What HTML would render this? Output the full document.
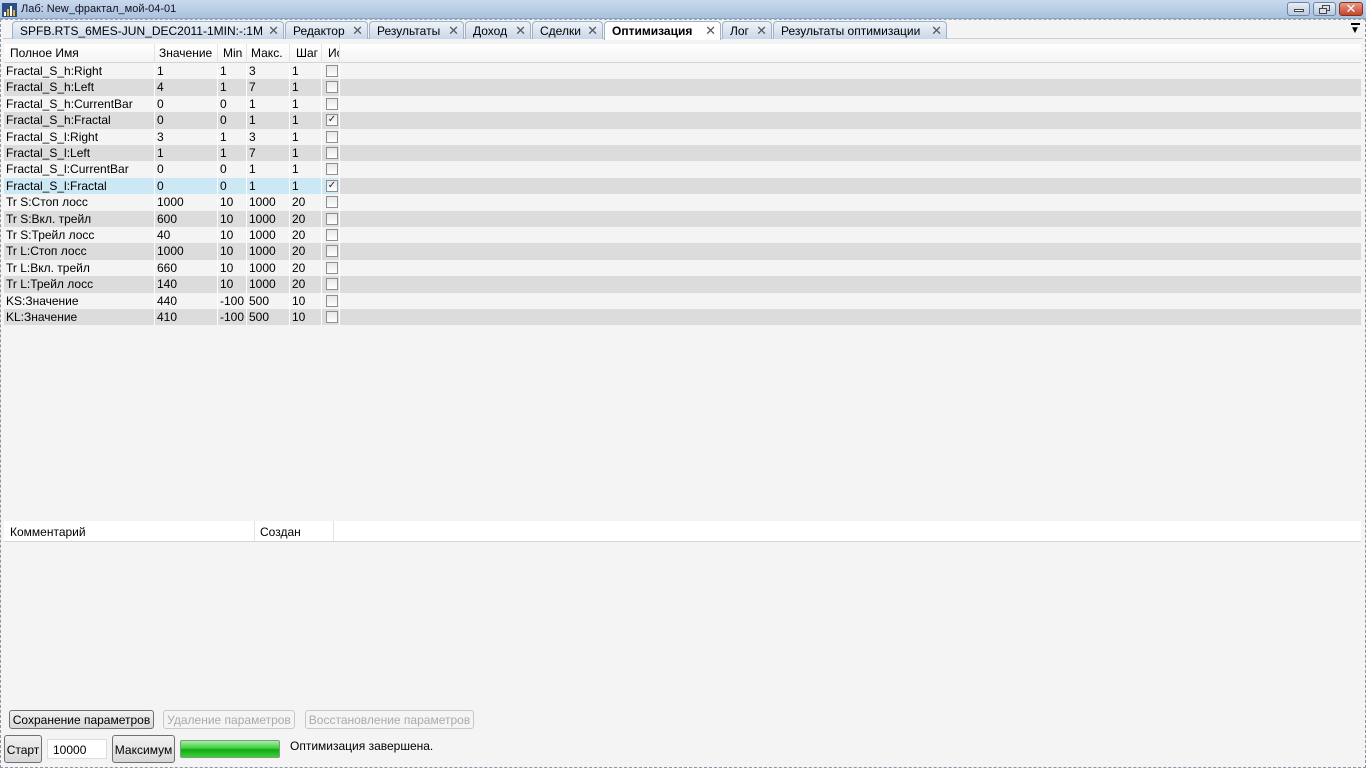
<!DOCTYPE html>
<html><head><meta charset="utf-8"><style>
*{margin:0;padding:0;box-sizing:border-box}
body{width:1366px;height:768px;overflow:hidden;background:#f4f4f4;font-family:"Liberation Sans","DejaVu Sans",sans-serif;font-size:11px;color:#000;position:relative}
.a{position:absolute}
.title{left:0;top:0;width:1366px;height:19px;background:linear-gradient(#c9d9ec,#a9c1de);border-bottom:1px solid #8aa3c4}
.tab{position:absolute;top:21px;height:18px;background:linear-gradient(#eef3f9,#c9d7e8);border:1px solid #9fb2c8;border-bottom:none;border-radius:4px 4px 0 0;font-size:12px;padding:2px 0 0 7px;white-space:nowrap}
.tab .x{position:absolute;right:4px;top:1px;font-size:13px;color:#555}
.tab.act{background:#fff;font-weight:bold;height:19px}
.row{position:absolute;left:4px;width:1357px;height:16.4px;font-size:12px}
.c{position:absolute;top:0;height:100%;border-right:1px solid #fff;padding:1px 0 0 2px;white-space:nowrap}
.cb{position:absolute;left:322px;top:2px;width:12px;height:12px;border:1px solid #8e8f8f;background:linear-gradient(#e8e8e8,#fff);font-size:10px;color:#223;line-height:10px;text-align:center}
.btn{position:absolute;border:1px solid #707070;border-radius:3px;background:linear-gradient(#f2f2f2,#d8d8d8);font-size:12px;text-align:center;padding-top:2px;white-space:nowrap}
.dis{color:#aaa;border-color:#c8c8c8;background:#f4f4f4}
</style></head><body>
<div class="a title"></div>
<div class="a" style="left:2px;top:3px;width:15px;height:14px;background:#2a4f86">
<div class="a" style="left:2px;top:9px;width:2px;height:4px;background:#fff"></div>
<div class="a" style="left:5px;top:6px;width:2px;height:7px;background:#f0b020"></div>
<div class="a" style="left:8px;top:3px;width:2px;height:10px;background:#fff"></div>
<div class="a" style="left:11px;top:7px;width:2px;height:6px;background:#f0b020"></div>
</div>
<div class="a" style="left:21px;top:3px;font-size:11px;color:#112">Лаб: New_фрактал_мой-04-01</div>
<div class="a" style="left:1287px;top:2px;width:23px;height:14px;border:1px solid #6d84a6;border-radius:3px;background:linear-gradient(#e8eef6,#b9c9de)"><div class="a" style="left:6px;top:6px;width:10px;height:3px;background:#fff;border:1px solid #444"></div></div>
<div class="a" style="left:1313px;top:2px;width:23px;height:14px;border:1px solid #6d84a6;border-radius:3px;background:linear-gradient(#e8eef6,#b9c9de)"><div class="a" style="left:8px;top:2px;width:8px;height:6px;border:1px solid #444"></div><div class="a" style="left:5px;top:5px;width:8px;height:6px;border:1px solid #444;background:#dde"></div></div>
<div class="a" style="left:1339px;top:2px;width:24px;height:14px;border:1px solid #8a3020;border-radius:3px;background:linear-gradient(#e79a86,#c2452c);color:#fff;font-weight:bold;font-size:13px;text-align:center;line-height:12px">✕</div>
<div class="a" style="left:0;top:19px;width:1366px;height:749px;border:1px dashed #8a95a8;border-top:1px dashed #9aa"></div>
<div class="a" style="left:3px;top:38px;width:1360px;height:1px;background:#ccd"></div>
<div class="a" style="left:1350px;top:25px;font-size:10px">▼</div>
<div class="a" style="left:1351px;top:23px;width:9px;height:2px;background:#000"></div>

<div class="tab" style="left:12px;width:272px">SPFB.RTS_6MES-JUN_DEC2011-1MIN:-:1M<span class="x">✕</span></div>
<div class="tab" style="left:285px;width:83px">Редактор<span class="x">✕</span></div>
<div class="tab" style="left:369px;width:95px">Результаты<span class="x">✕</span></div>
<div class="tab" style="left:465px;width:66px">Доход<span class="x">✕</span></div>
<div class="tab" style="left:532px;width:71px">Сделки<span class="x">✕</span></div>
<div class="tab act" style="left:604px;width:117px">Оптимизация<span class="x" style="font-weight:normal">✕</span></div>
<div class="tab" style="left:722px;width:50px">Лог<span class="x">✕</span></div>
<div class="tab" style="left:773px;width:174px">Результаты оптимизации<span class="x">✕</span></div>

<div class="a" style="left:4px;top:44px;width:1357px;height:19px;background:linear-gradient(#fff,#f4f4f4);border-bottom:1px solid #d5d5d5;font-size:12px">
<div class="c" style="left:0;width:151px;padding:2px 0 0 6px;border-color:#e4e4e4">Полное Имя</div>
<div class="c" style="left:151px;width:63px;padding:2px 0 0 4px;border-color:#e4e4e4">Значение</div>
<div class="c" style="left:214px;width:29px;padding:2px 0 0 5px;border-color:#e4e4e4">Min</div>
<div class="c" style="left:243px;width:43px;padding:2px 0 0 4px;border-color:#e4e4e4">Макс.</div>
<div class="c" style="left:286px;width:32px;padding:2px 0 0 6px;border-color:#e4e4e4">Шаг</div>
<div class="c" style="left:318px;width:18px;padding:2px 0 0 6px;border-color:#e4e4e4;overflow:hidden">Ис</div>
</div>

<div id="rows"></div>
<script>
var d=[["Fractal_S_h:Right",1,1,3,1,0],["Fractal_S_h:Left",4,1,7,1,0],["Fractal_S_h:CurrentBar",0,0,1,1,0],["Fractal_S_h:Fractal",0,0,1,1,1],["Fractal_S_l:Right",3,1,3,1,0],["Fractal_S_l:Left",1,1,7,1,0],["Fractal_S_l:CurrentBar",0,0,1,1,0],["Fractal_S_l:Fractal",0,0,1,1,1],["Tr S:Стоп лосс",1000,10,1000,20,0],["Tr S:Вкл. трейл",600,10,1000,20,0],["Tr S:Трейл лосс",40,10,1000,20,0],["Tr L:Стоп лосс",1000,10,1000,20,0],["Tr L:Вкл. трейл",660,10,1000,20,0],["Tr L:Трейл лосс",140,10,1000,20,0],["KS:Значение",440,-100,500,10,0],["KL:Значение",410,-100,500,10,0]];
var h="";
d.forEach(function(r,i){var bg=i%2?"#dcdcdc":"#f4f4f4";var sel=i==7;
h+='<div class="row" style="top:'+(63+i*16.4)+'px;background:'+bg+'">'+(sel?'<div class="a" style="left:0;top:0;width:336px;height:100%;background:#cce8f4"></div>':'')+
'<div class="c" style="left:0;width:151px">'+r[0]+'</div><div class="c" style="left:151px;width:63px">'+r[1]+'</div><div class="c" style="left:214px;width:29px">'+r[2]+'</div><div class="c" style="left:243px;width:43px">'+r[3]+'</div><div class="c" style="left:286px;width:32px">'+r[4]+'</div><div class="c" style="left:318px;width:18px"></div><div class="cb" style="left:322px">'+(r[5]?'✓':'')+'</div></div>';});
document.getElementById("rows").innerHTML=h;
</script>

<div class="a" style="left:4px;top:521px;width:1357px;height:21px;background:#fff;border-bottom:1px solid #d5d5d5;font-size:12px">
<div class="c" style="left:0;width:251px;padding:4px 0 0 6px;border-color:#e4e4e4">Комментарий</div>
<div class="c" style="left:251px;width:79px;padding:4px 0 0 5px;border-color:#e4e4e4">Создан</div>
</div>

<div class="btn" style="left:9px;top:710px;width:145px;height:19px">Сохранение параметров</div>
<div class="btn dis" style="left:163px;top:710px;width:132px;height:19px">Удаление параметров</div>
<div class="btn dis" style="left:305px;top:710px;width:169px;height:19px">Восстановление параметров</div>
<div class="btn" style="left:4px;top:735px;width:38px;height:28px;padding-top:7px">Старт</div>
<div class="a" style="left:47px;top:739px;width:60px;height:20px;background:#fff;border:1px solid #ddd;font-size:12px;padding:3px 0 0 5px">10000</div>
<div class="btn" style="left:112px;top:735px;width:63px;height:28px;padding-top:7px">Максимум</div>
<div class="a" style="left:180px;top:740px;width:100px;height:18px;border:1px solid #7a9a7a;border-radius:2px;background:linear-gradient(#a8eea8 0%,#3fcf3f 45%,#11a811 55%,#3bd13b 100%)"></div>
<div class="a" style="left:290px;top:739px;font-size:12px">Оптимизация завершена.</div>
</body></html>
